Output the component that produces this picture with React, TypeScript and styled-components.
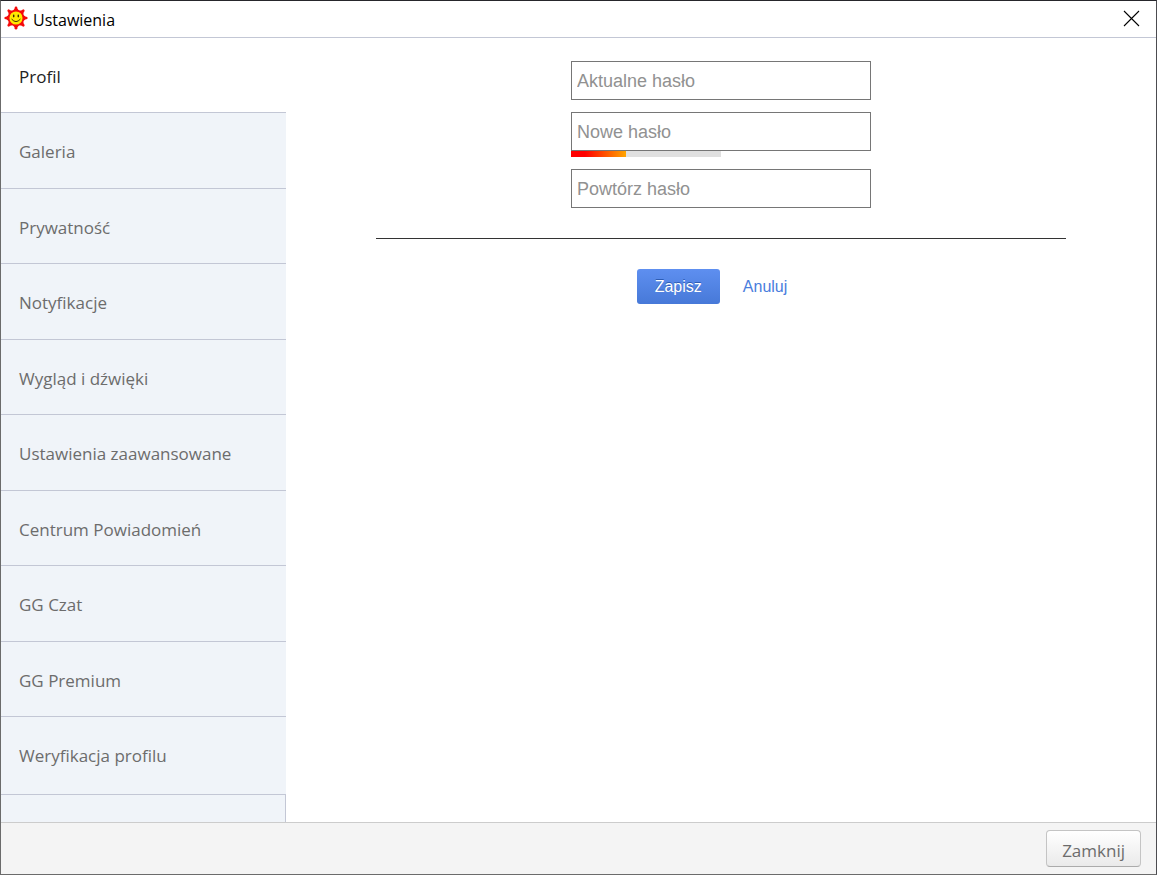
import React, { useState } from "react";
import styled, { createGlobalStyle } from "styled-components";

const GlobalStyle = createGlobalStyle`
  *, *::before, *::after { box-sizing: border-box; }
  body {
    margin: 0;
    background: #ffffff;
    font-family: "Open Sans", "Noto Sans", sans-serif;
  }
  button, input { font: inherit; margin: 0; }
`;

const Window = styled.div`
  display: flex;
  flex-direction: column;
  min-height: 100vh;
  border: 1px solid #6b6b6b;
  border-top-color: #26262b;
  border-right-color: #4c4c50;
  background: #ffffff;
`;

const TitleBar = styled.header`
  display: flex;
  align-items: center;
  height: 37px;
  padding: 0 16px 2px 3px;
  border-bottom: 1px solid #c3c7d5;
`;

const Title = styled.h1`
  flex: 1;
  margin: 0 0 0 5px;
  padding-top: 3px;
  font-size: 16px;
  line-height: 24px;
  font-weight: 400;
  color: #000000;
`;

const CloseButton = styled.button`
  display: flex;
  padding: 0;
  border: 0;
  background: none;
  cursor: pointer;
`;

const Body = styled.div`
  display: flex;
  flex: 1;
`;

const Sidebar = styled.nav`
  display: flex;
  flex-direction: column;
  flex: none;
  width: 285px;
`;

const TabList = styled.ul`
  margin: 0;
  padding: 0;
  list-style: none;
`;

const TabItem = styled.li`
  height: 75px;
  border-bottom: 1px solid #c3c7d5;
  &:nth-child(even) { height: 76px; }
  &:last-child { height: 78px; }
`;

const Tab = styled.button<{ $active: boolean }>`
  display: flex;
  align-items: flex-start;
  width: 100%;
  height: 100%;
  padding: 27px 18px 0;
  border: 0;
  background: ${(p) => (p.$active ? "#ffffff" : "#f0f4f9")};
  color: ${(p) => (p.$active ? "#222222" : "#6c6c6c")};
  font-size: 17px;
  line-height: 24px;
  text-align: left;
  cursor: pointer;
`;

const SidebarFiller = styled.div`
  flex: 1;
  background: #f0f4f9;
  border-right: 1px solid #c3c7d5;
`;

const Main = styled.main`
  flex: 1;
  padding: 23px 90px;
  font-family: "Liberation Sans", Arial, sans-serif;
`;

const Fields = styled.div`
  display: flex;
  flex-direction: column;
  gap: 12px;
  width: 300px;
  margin: 0 auto;
`;

const PasswordInput = styled.input`
  display: block;
  width: 100%;
  height: 39px;
  padding: 2px 5px 0;
  border: 1px solid #767676;
  border-radius: 0;
  background: #ffffff;
  color: #222222;
  font-size: 18px;
  &::placeholder { color: #919191; opacity: 1; }
`;

const StrengthTrack = styled.div`
  width: 150px;
  height: 6px;
  background: #e0e0e0;
`;

const StrengthBar = styled.div`
  height: 100%;
  background: linear-gradient(to right, #ff0000 25%, #ffa500);
`;

const Divider = styled.hr`
  height: 1px;
  margin: 30px 0;
  border: 0;
  background: #333333;
`;

const Actions = styled.div`
  display: flex;
  justify-content: center;
  gap: 5px;
`;

const SaveButton = styled.button`
  height: 35px;
  padding: 0 18px;
  border: 0;
  border-radius: 3px;
  background: linear-gradient(#5e8ff0, #4779d8);
  color: #ffffff;
  font-size: 16px;
  text-shadow: 0 -1px 0 #2d5cb4;
  cursor: pointer;
`;

const CancelLink = styled.a`
  padding: 0 18px;
  color: #4a7ddd;
  font-size: 16px;
  line-height: 35px;
  text-decoration: none;
`;

const Footer = styled.footer`
  display: flex;
  justify-content: flex-end;
  padding: 7px 15px;
  border-top: 1px solid #cccccc;
  background: #f4f4f4;
`;

const FooterButton = styled.button`
  height: 37px;
  padding: 4px 15px 0;
  border: 1px solid #c4c4c4;
  border-bottom-color: #ababab;
  border-radius: 4px;
  background: linear-gradient(#ffffff, #eaeaea);
  color: #6c6c6c;
  font-size: 17px;
  line-height: 24px;
  cursor: pointer;
`;

const tabs = [
  "Profil",
  "Galeria",
  "Prywatność",
  "Notyfikacje",
  "Wygląd i dźwięki",
  "Ustawienia zaawansowane",
  "Centrum Powiadomień",
  "GG Czat",
  "GG Premium",
  "Weryfikacja profilu",
];

const rays = [0, 45, 90, 135, 180, 225, 270, 315];

function SunLogo() {
  return (
    <svg width="24" height="24" viewBox="0 0 24 24" aria-hidden="true">
      {rays.map((angle) => (
        <g key={angle} transform={`rotate(${angle} 12 12)`} fill="#f50a0a">
          <path d="M8.6 5.5L11.2 1.5H12.8L15.4 5.5Z" />
          <circle cx="12" cy="1.7" r="1.3" />
        </g>
      ))}
      <circle cx="12" cy="12" r="7.4" fill="#ffe900" stroke="#f50a0a" strokeWidth="1.7" />
      <ellipse cx="9.7" cy="10" rx="0.8" ry="1.4" fill="#3a2c00" />
      <ellipse cx="14.3" cy="10" rx="0.8" ry="1.4" fill="#3a2c00" />
      <path d="M7.8 13.3Q12 18.2 16.2 13.3" fill="none" stroke="#4a3500" strokeWidth="1" strokeLinecap="round" />
    </svg>
  );
}

export default function App() {
  const [active, setActive] = useState(0);
  const strength = 11 / 30;

  return (
    <Window>
      <GlobalStyle />
      <TitleBar>
        <SunLogo />
        <Title>Ustawienia</Title>
        <CloseButton type="button" aria-label="Zamknij okno">
          <svg width="17" height="17" viewBox="0 0 17 17" aria-hidden="true">
            <path d="M1 1L16 16M16 1L1 16" stroke="#000000" strokeWidth="1.1" />
          </svg>
        </CloseButton>
      </TitleBar>
      <Body>
        <Sidebar>
          <TabList>
            {tabs.map((label, index) => (
              <TabItem key={label}>
                <Tab
                  type="button"
                  $active={index === active}
                  aria-current={index === active ? "page" : undefined}
                  onClick={() => setActive(index)}
                >
                  {label}
                </Tab>
              </TabItem>
            ))}
          </TabList>
          <SidebarFiller />
        </Sidebar>
        <Main>
          <form onSubmit={(event) => event.preventDefault()}>
            <Fields>
              <PasswordInput type="password" aria-label="Aktualne hasło" placeholder="Aktualne hasło" />
              <div>
                <PasswordInput type="password" aria-label="Nowe hasło" placeholder="Nowe hasło" />
                <StrengthTrack>
                  <StrengthBar style={{ width: `${strength * 100}%` }} />
                </StrengthTrack>
              </div>
              <PasswordInput type="password" aria-label="Powtórz hasło" placeholder="Powtórz hasło" />
            </Fields>
            <Divider />
            <Actions>
              <SaveButton type="submit">Zapisz</SaveButton>
              <CancelLink href="#">Anuluj</CancelLink>
            </Actions>
          </form>
        </Main>
      </Body>
      <Footer>
        <FooterButton type="button">Zamknij</FooterButton>
      </Footer>
    </Window>
  );
}
